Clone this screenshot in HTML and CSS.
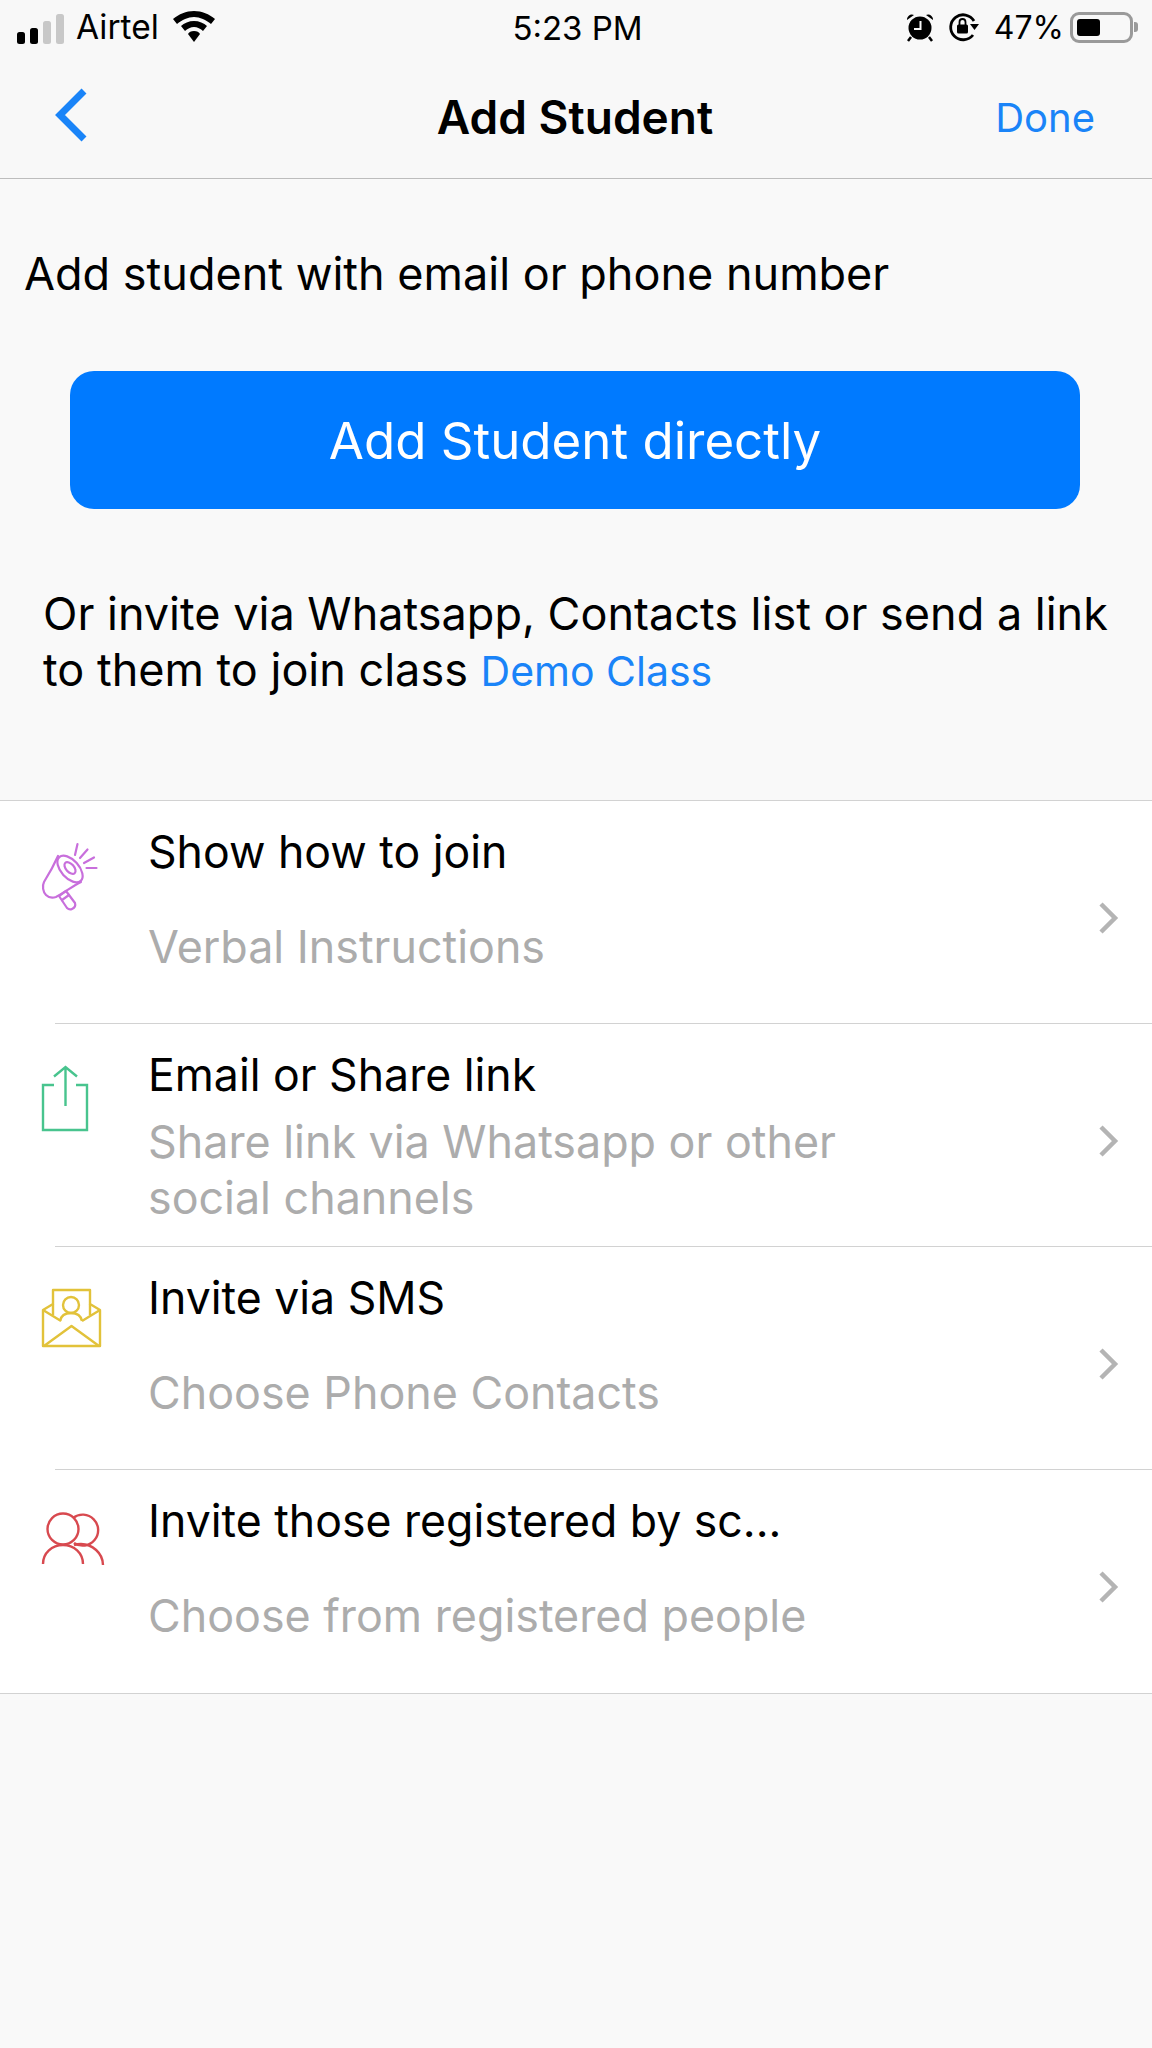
FILE: index.html
```html
<!DOCTYPE html>
<html lang="en">
<head>
<meta charset="utf-8">
<title>Add Student</title>
<link rel="stylesheet" href="styles.css">
</head>
<body>
<header class="top">
  <div class="status">
    <div class="status-left">
      <svg class="signal" width="48" height="30" viewBox="0 0 48 30"><rect x="0" y="18" width="8" height="12" rx="2.5" fill="#000"/><rect x="13" y="14" width="8" height="16" rx="2.5" fill="#000"/><rect x="26" y="7" width="8" height="23" rx="2.5" fill="#c8c8c8"/><rect x="39" y="0" width="8" height="30" rx="2.5" fill="#c8c8c8"/></svg>
      <span class="carrier">Airtel</span>
      <svg class="wifi" width="42" height="32" viewBox="0 0 42 32"><path d="M21 0C13 0 6 3 0 8l4 5c5-4 11-7 17-7s12 3 17 7l4-5C36 3 29 0 21 0z" fill="#000"/><path d="M21 10c-5 0-10 2-13 5l4 5c2-2 6-4 9-4s7 2 9 4l4-5c-3-3-8-5-13-5z" fill="#000"/><path d="M21 20c-3 0-5 1-6 3l6 8 6-8c-1-2-3-3-6-3z" fill="#000"/></svg>
    </div>
    <span class="clock">5:23 PM</span>
    <div class="status-right">
      <svg class="alarm" width="28" height="30" viewBox="0 0 28 30"><circle cx="14" cy="16" r="11.5" fill="#000"/><path d="M1 8a5 5 0 0 1 7-5zM27 8a5 5 0 0 0-7-5z" fill="#000"/><path d="M5 25l-3 4M23 25l3 4" stroke="#000" stroke-width="2.5"/><path d="M14.500 9v8H8" fill="none" stroke="#f8f8f8" stroke-width="2"/></svg>
      <svg class="lock" width="31" height="30" viewBox="0 0 31 30"><path d="M25 23A12.500 12.500 0 1 1 26 9" fill="none" stroke="#000" stroke-width="2.800"/><path d="M22 12h9l-4.500 6z" fill="#000"/><rect x="9" y="12.500" width="11" height="9" rx="1.500" fill="#000"/><path d="M11.500 13V10a3 3 0 0 1 6 0v3" fill="none" stroke="#000" stroke-width="1.800"/></svg>
      <span class="percent">47%</span>
      <div class="battery"><div class="battery-level"></div></div>
      <div class="battery-nub"></div>
    </div>
  </div>
  <nav class="nav">
    <svg class="back" width="34" height="54" viewBox="0 0 34 54"><path d="M29 3L5 27l24 24" fill="none" stroke="#1a84f8" stroke-width="7"/></svg>
    <h1 class="title">Add Student</h1>
    <span class="done">Done</span>
  </nav>
</header>

<main>
  <p class="lead">Add student with email or phone number</p>
  <button class="primary" type="button">Add Student directly</button>
  <div class="invite">
    <div class="invite-line">Or invite via Whatsapp, Contacts list or send a link</div>
    <div class="invite-line"><span>to them to join class</span> <span class="class-link">Demo Class</span></div>
  </div>

  <ul class="list">
    <li class="row">
      <svg class="icon icon-megaphone" width="100" height="110" viewBox="0 0 100 110"><g fill="none" stroke="#c86fdc" stroke-width="2.200" stroke-linecap="round" stroke-linejoin="round"><path d="M57.500 24L55 35M67.500 29.500L60 38M74 37.500L64 43M76.500 48H66.500"/><path d="M38 36C34 45 29 54 24 62c-2 4-1 10 2 13 3 3 7 3 10 2C45 72 53 66 61 62"/><ellipse cx="50" cy="49" rx="9" ry="16" transform="rotate(-42 50 49)"/><ellipse cx="50" cy="48" rx="4" ry="7" transform="rotate(-42 50 48)"/><path d="M39 76l7-5 9 12c1 3-1 5-3 6-2 1-4 0-5-1z"/><path d="M42 80l7-5"/></g></svg>
      <div class="copy">
        <div class="name">Show how to join</div>
        <div class="sub">Verbal Instructions</div>
      </div>
      <svg class="chevron" width="24" height="36" viewBox="0 0 24 36"><path d="M4 4l14 14L4 32" fill="none" stroke="#b4b4b4" stroke-width="4.500"/></svg>
    </li>
    <li class="row">
      <svg class="icon icon-share" width="100" height="110" viewBox="0 0 100 110"><g fill="none" stroke="#48c48e" stroke-width="2.400"><path d="M34 34H23v45h44V34H56"/><path d="M45.500 55V17M34 25.500L45.500 16 57 25.500"/></g></svg>
      <div class="copy">
        <div class="name">Email or Share link</div>
        <div class="sub">Share link via Whatsapp or other social channels</div>
      </div>
      <svg class="chevron" width="24" height="36" viewBox="0 0 24 36"><path d="M4 4l14 14L4 32" fill="none" stroke="#b4b4b4" stroke-width="4.500"/></svg>
    </li>
    <li class="row">
      <svg class="icon icon-envelope" width="100" height="110" viewBox="0 0 100 110"><g fill="none" stroke="#e2c23a" stroke-width="2.400" stroke-linejoin="round"><path d="M23 39L33 33V19h37v14L80 39V75H23z"/><path d="M23 39L41 50M80 39L62 50M24 75L51.500 55 79 75"/><path d="M33 33v11M70 33v11"/><circle cx="51" cy="34" r="8"/><path d="M40 50c1-5 5-8 11-8s10 3 11 8"/></g></svg>
      <div class="copy">
        <div class="name">Invite via SMS</div>
        <div class="sub">Choose Phone Contacts</div>
      </div>
      <svg class="chevron" width="24" height="36" viewBox="0 0 24 36"><path d="M4 4l14 14L4 32" fill="none" stroke="#b4b4b4" stroke-width="4.500"/></svg>
    </li>
    <li class="row row-last">
      <svg class="icon icon-group" width="100" height="110" viewBox="0 0 100 110"><g fill="none" stroke="#d8494f" stroke-width="2.400"><circle cx="43" cy="37" r="15.500"/><path d="M53 26A15.500 15.500 0 1 1 54 51"/><path d="M23 72c0-11 9-19 20-19s20 8 20 19"/><path d="M54 53c3-1 5-1 7-1 11 0 22 9 22 21"/></g></svg>
      <div class="copy">
        <div class="name">Invite those registered by sc...</div>
        <div class="sub">Choose from registered people</div>
      </div>
      <svg class="chevron" width="24" height="36" viewBox="0 0 24 36"><path d="M4 4l14 14L4 32" fill="none" stroke="#b4b4b4" stroke-width="4.500"/></svg>
    </li>
  </ul>
</main>
</body>
</html>
```
FILE: styles.css
```css
* { box-sizing: border-box; }
html, body { margin: 0; padding: 0; }
body {
  width: 1152px;
  height: 2048px;
  overflow: hidden;
  background: #f9f9f9;
  color: #000;
  font-family: Inter, "Liberation Sans", sans-serif;
}
.top { height: 179px; background: #f8f8f8; border-bottom: 1px solid #bdbdbd; }
.status {
  height: 54px;
  padding: 10px 14px 0 17px;
  display: grid;
  grid-template-columns: 1fr auto 1fr;
  align-items: start;
}
.status-left, .status-right { display: flex; align-items: center; height: 34px; }
.status-right { justify-content: flex-end; }
.signal { margin-top: 3px; }
.carrier { margin-left: 11px; font-size: 33.500px; }
.wifi { margin-left: 14px; }
.clock { font-size: 33px; line-height: 36px; }
.alarm { margin-right: 14px; }
.lock { margin-right: 15px; }
.percent { font-size: 32px; margin-right: 6px; }
.battery { width: 63px; height: 31px; border: 3px solid #9a9a9a; border-radius: 9px; padding: 4px; }
.battery-level { width: 23px; height: 17px; background: #000; border-radius: 3px; }
.battery-nub { width: 4px; height: 10px; margin-left: 1px; background: #9a9a9a; border-radius: 0 3px 3px 0; }
.nav {
  height: 124px;
  padding: 0 57px 0 55px;
  display: grid;
  grid-template-columns: 1fr auto 1fr;
  align-items: center;
}
.back { margin-top: -2px; }
.title { margin: 2px 0 0; font-size: 46px; font-weight: 600; line-height: 60px; }
.done { justify-self: end; margin-top: 2px; font-size: 40px; color: #1a84f8; }
.lead { margin: 0; padding: 64px 24px 0; font-size: 45px; line-height: 62px; }
.primary {
  display: block;
  width: 1010px;
  height: 138px;
  margin: 66px 0 0 70px;
  border: 0;
  border-radius: 24px;
  background: #007aff;
  color: #fff;
  font: 51px Inter, "Liberation Sans", sans-serif;
}
.invite { padding: 77px 0 0 43px; font-size: 45px; line-height: 56px; }
.class-link { color: #1a84f8; font-size: 41px; }
.list {
  margin: 101px 0 0;
  padding: 0;
  list-style: none;
  background: #fff;
  border-top: 1px solid #d2d2d2;
  border-bottom: 1px solid #d2d2d2;
}
.row {
  margin-left: 55px;
  height: 223px;
  display: flex;
  border-bottom: 1px solid #d2d2d2;
}
.row-last { border-bottom: 0; }
.icon { flex: none; margin-left: -35px; }
.icon-megaphone { margin-top: 19px; }
.icon-share { margin-top: 27px; }
.icon-envelope { margin-top: 24px; }
.icon-group { margin-top: 22px; }
.copy { width: 770px; margin-left: 28px; display: flex; flex-direction: column; }
.name { font-size: 44.600px; line-height: 56px; margin-top: 23px; }
.sub { flex: 1; display: flex; align-items: center; padding-bottom: 10px; font-size: 44.800px; line-height: 56px; color: #acacac; }
.chevron { flex: none; margin: 99px 0 0 179px; }
```
